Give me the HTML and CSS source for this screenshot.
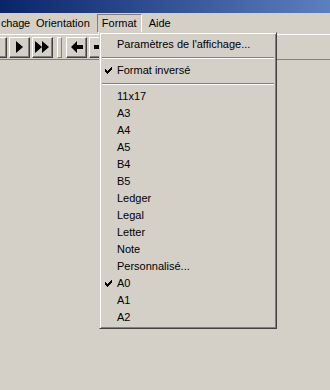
FILE: index.html
```html
<!DOCTYPE html>
<html lang="fr">

<head>
  <meta charset="UTF-8">
  <meta name="viewport" content="width=device-width, initial-scale=1.0">
  <title>Format</title>
  <link rel="stylesheet" href="styles.css">
</head>

<body>
  <div class="window">
    <div class="titlebar"></div>

    <div class="menubar">
      <div class="menu-item first">chage</div>
      <div class="menu-item">Orientation</div>
      <div class="menu-item open">Format</div>
      <div class="menu-item">Aide</div>
    </div>

    <div class="toolbar">
      <div class="btn first"></div>
      <div class="btn">
        <svg width="8" height="12" viewBox="0 0 8 12"><path d="M0 0 L7 6 L0 12 Z" fill="#000"/></svg>
      </div>
      <div class="btn">
        <svg width="15" height="12" viewBox="0 0 15 12"><path d="M0 0 L7 6 L0 12 Z M7 0 L14 6 L7 12 Z" fill="#000"/></svg>
      </div>
      <div class="grip"></div>
      <div class="btn">
        <svg width="12" height="12" viewBox="0 0 12 12"><path d="M0 6 L6 0 L6 4 L12 4 L12 8 L6 8 L6 12 Z" fill="#000"/></svg>
      </div>
      <div class="btn">
        <svg width="12" height="12" viewBox="0 0 12 12"><path d="M12 6 L6 0 L6 4 L0 4 L0 8 L6 8 L6 12 Z" fill="#000"/></svg>
      </div>
    </div>

    <!-- menu déroulant Format -->
    <div class="dropdown">
      <div class="entry">Paramètres de l'affichage...</div>
      <div class="sep"></div>
      <div class="entry checked">Format inversé</div>
      <div class="sep"></div>
      <div class="entry">11x17</div>
      <div class="entry">A3</div>
      <div class="entry">A4</div>
      <div class="entry">A5</div>
      <div class="entry">B4</div>
      <div class="entry">B5</div>
      <div class="entry">Ledger</div>
      <div class="entry">Legal</div>
      <div class="entry">Letter</div>
      <div class="entry">Note</div>
      <div class="entry">Personnalisé...</div>
      <div class="entry checked">A0</div>
      <div class="entry">A1</div>
      <div class="entry">A2</div>
    </div>
  </div>
</body>

</html>
```

FILE: styles.css
```css
body {
  margin: 0;
  background: #d4d0c8;
  font-family: "Liberation Sans", Arial, sans-serif;
  font-size: 11px;
  color: #000;
}

.window {
  position: relative;
  width: 330px;
  height: 390px;
  overflow: hidden;
}

.titlebar {
  height: 13px;
  background: linear-gradient(to right, #0a246a, #5c7fc0);
}

.menubar {
  height: 21px;
  display: flex;
  align-items: center;
  gap: 2px;
}

.menu-item {
  padding: 2px 4px 3px;
  border: 1px solid transparent;
}

.menu-item.first {
  margin-left: 1px;
  margin-right: -1px;
  padding-left: 0;
  padding-right: 0;
  border-width: 1px 0;
  letter-spacing: -0.2px;
}

.menu-item.open {
  border-color: #808080 #fff #fff #808080;
}

.toolbar {
  display: flex;
  align-items: center;
  gap: 2px;
  height: 24px;
  border-top: 1px solid #fff;
  border-bottom: 1px solid #808080;
}

.btn {
  width: 19px;
  height: 19px;
  display: flex;
  align-items: center;
  justify-content: center;
  border: 1px solid;
  border-color: #fff #404040 #404040 #fff;
  box-shadow: inset -1px -1px #808080;
}

.btn.first {
  margin-left: -14px;
}

.grip {
  width: 3px;
  height: 19px;
  margin: 0 2px;
  border: 1px solid;
  border-color: #fff #808080 #808080 #fff;
}

.dropdown {
  position: absolute;
  left: 99px;
  top: 32px;
  width: 174px;
  padding: 3px 1px 2px;
  border: 1px solid;
  border-color: #d4d0c8 #404040 #404040 #d4d0c8;
  box-shadow: inset 1px 1px #fff, inset -1px -1px #808080;
  background: #d4d0c8;
}

.entry {
  position: relative;
  height: 17px;
  line-height: 17px;
  padding-left: 16px;
  white-space: nowrap;
}

.entry.checked::before {
  content: "";
  position: absolute;
  left: 4px;
  top: 5px;
  width: 7px;
  height: 7px;
  background: url("data:image/svg+xml,%3Csvg xmlns='http://www.w3.org/2000/svg' width='7' height='7'%3E%3Cpath d='M0 2h1v1h1v1h1V3h1V2h1V1h1V0h1v3H6v1H5v1H4v1H3v1H2V6H1V5H0z' fill='%23000'/%3E%3C/svg%3E") no-repeat;
}

.sep {
  margin: 4px 1px 3px;
  border-top: 1px solid #808080;
  border-bottom: 1px solid #fff;
  height: 0;
}
```
